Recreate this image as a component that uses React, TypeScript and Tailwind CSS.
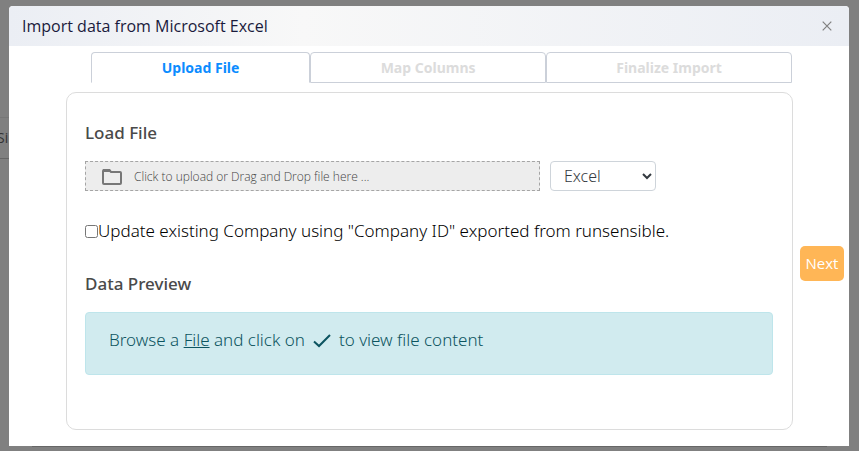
import { useState } from "react";

const tabs = [
  { label: "Upload File", grow: "grow-[219] text-[#0b8cff] border-b-white", active: true },
  { label: "Map Columns", grow: "grow-[236] text-[#dcdcdc] border-b-[#cbd0d9]", active: false },
  { label: "Finalize Import", grow: "grow-[246] text-[#dcdcdc] border-b-[#cbd0d9]", active: false },
];

function FolderIcon() {
  return (
    <svg width="22" height="18" viewBox="0 0 22 18" fill="none" aria-hidden="true">
      <path
        d="M2 3V15a1 1 0 0 0 1 1h16a1 1 0 0 0 1-1V5a1 1 0 0 0-1-1h-9L8 2H3a1 1 0 0 0-1 1z"
        stroke="#777"
        strokeWidth="2"
      />
      <path d="M2 1h7l2 3H2z" fill="#777" />
    </svg>
  );
}

function CheckIcon() {
  return (
    <svg width="18" height="14" viewBox="0 0 18 14" fill="none" className="mx-2 inline-block" aria-hidden="true">
      <path d="M1 7.5l5 4.5L17 1" stroke="#0c5460" strokeWidth="2" />
    </svg>
  );
}

export default function App() {
  const [format, setFormat] = useState("Excel");
  return (
    <div className="relative min-h-screen overflow-hidden bg-[#808080] px-[9px] pt-[6px] pr-[10px] pb-[5px] font-['Open_Sans','Noto_Sans',sans-serif]">
      <div className="absolute top-[117px] left-0 flex h-[42px] w-6 items-center border-t border-b border-t-[#777] border-b-[#666] text-sm text-[#333]">
        <span className="-ml-[3px]">Si</span>
      </div>
      <div className="absolute right-8 bottom-1 left-8 h-px bg-[#666]" />

      <div role="dialog" aria-labelledby="dialog-title" className="relative rounded-t bg-white">
        <header className="flex h-10 items-center justify-between rounded-t bg-linear-to-r from-[#ebeef4] via-[#f8f8f8] via-35% to-[#ebeef4] pr-4 pl-[13px]">
          <h1 id="dialog-title" className="text-base font-normal text-[#1a1a3c]">
            Import data from Microsoft Excel
          </h1>
          <button type="button" aria-label="Close" className="p-px">
            <svg width="10" height="10" viewBox="0 0 10 10" stroke="#808080" strokeWidth="1.2" aria-hidden="true">
              <path d="M.7.7l8.6 8.6M9.3.7L.7 9.3" />
            </svg>
          </button>
        </header>

        <div className="flex items-center pt-[6px] pr-[5px] pb-4 pl-[57px]">
          <div className="min-w-0 grow">
            <div role="tablist" className="mr-px ml-[25px] flex h-[31px]">
              {tabs.map((tab) => (
                <button
                  key={tab.label}
                  type="button"
                  role="tab"
                  aria-selected={tab.active}
                  className={`basis-0 rounded-t border border-[#cbd0d9] font-['Noto_Sans',sans-serif] text-sm font-bold ${tab.grow}`}
                >
                  {tab.label}
                </button>
              ))}
            </div>

            <main className="mt-[9px] rounded-[10px] border border-[#dcdcdc] pr-[19px] pl-[18px] pt-7 pb-[54px]">
              <h2 className="font-['Noto_Sans',sans-serif] text-[17px] leading-6 font-medium text-[#4a4a4a]">Load File</h2>
              <div className="mt-4 flex gap-[10px]">
                <button
                  type="button"
                  className="flex h-[30px] grow items-center gap-[11px] border border-dashed border-[#a5a5a5] bg-[#ededed] pt-px pl-[15px] text-xs font-light text-[#444]"
                >
                  <FolderIcon />
                  Click to upload or Drag and Drop file here ...
                </button>
                <select
                  aria-label="File format"
                  value={format}
                  onChange={(e) => setFormat(e.target.value)}
                  className="mr-[117px] h-[30px] w-[106px] rounded border border-[#ced4da] bg-white pl-[9px] font-['Noto_Sans',sans-serif] text-base font-light text-[#343a40]"
                >
                  <option>Excel</option>
                  <option>CSV</option>
                </select>
              </div>
              <label className="mt-7 mb-[29px] flex items-center font-['Noto_Sans',sans-serif] text-[17px] leading-6 font-light whitespace-nowrap text-black">
                <input type="checkbox" className="size-[13px]" />
                Update existing Company using "Company ID" exported from runsensible.
              </label>
              <h2 className="font-['Noto_Sans',sans-serif] text-[17px] leading-6 font-medium text-[#4a4a4a]">Data Preview</h2>
              <div className="mt-4 rounded border border-[#bee5eb] bg-[#d1ebef] px-[23px] pt-[15px] pb-[22px] font-['Noto_Sans',sans-serif] text-[17px] leading-6 font-light text-[#0c5460]">
                Browse a{" "}
                <a href="#file" className="underline">
                  File
                </a>{" "}
                and click on
                <CheckIcon />
                to view file content
              </div>
            </main>
          </div>
          <button type="button" className="mt-[45px] ml-[7px] h-[35px] w-11 rounded-[5px] bg-[#ffb656] text-[15px] text-white">
            Next
          </button>
        </div>
      </div>
    </div>
  );
}
